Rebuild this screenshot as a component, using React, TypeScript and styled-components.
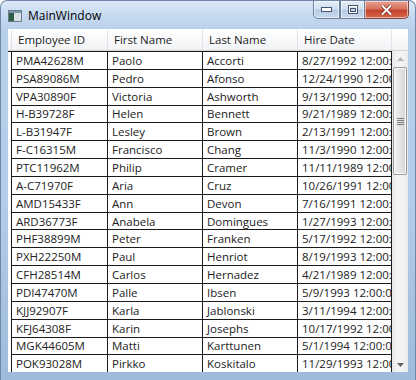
import React from "react";
import styled, { createGlobalStyle } from "styled-components";

const GlobalStyle = createGlobalStyle`
  html, body {
    margin: 0;
    padding: 0;
    background: #ffffff;
  }
  body {
    font-family: "Open Sans", "Noto Sans", sans-serif;
  }
`;

type Employee = {
  id: string;
  first: string;
  last: string;
  hired: string;
};

const employees: Employee[] = [
  { id: "PMA42628M", first: "Paolo", last: "Accorti", hired: "8/27/1992" },
  { id: "PSA89086M", first: "Pedro", last: "Afonso", hired: "12/24/1990" },
  { id: "VPA30890F", first: "Victoria", last: "Ashworth", hired: "9/13/1990" },
  { id: "H-B39728F", first: "Helen", last: "Bennett", hired: "9/21/1989" },
  { id: "L-B31947F", first: "Lesley", last: "Brown", hired: "2/13/1991" },
  { id: "F-C16315M", first: "Francisco", last: "Chang", hired: "11/3/1990" },
  { id: "PTC11962M", first: "Philip", last: "Cramer", hired: "11/11/1989" },
  { id: "A-C71970F", first: "Aria", last: "Cruz", hired: "10/26/1991" },
  { id: "AMD15433F", first: "Ann", last: "Devon", hired: "7/16/1991" },
  { id: "ARD36773F", first: "Anabela", last: "Domingues", hired: "1/27/1993" },
  { id: "PHF38899M", first: "Peter", last: "Franken", hired: "5/17/1992" },
  { id: "PXH22250M", first: "Paul", last: "Henriot", hired: "8/19/1993" },
  { id: "CFH28514M", first: "Carlos", last: "Hernadez", hired: "4/21/1989" },
  { id: "PDI47470M", first: "Palle", last: "Ibsen", hired: "5/9/1993" },
  { id: "KJJ92907F", first: "Karla", last: "Jablonski", hired: "3/11/1994" },
  { id: "KFJ64308F", first: "Karin", last: "Josephs", hired: "10/17/1992" },
  { id: "MGK44605M", first: "Matti", last: "Karttunen", hired: "5/1/1994" },
  { id: "POK93028M", first: "Pirkko", last: "Koskitalo", hired: "11/29/1993" },
];

const columns = [
  { title: "Employee ID", width: 96 },
  { title: "First Name", width: 95 },
  { title: "Last Name", width: 95 },
  { title: "Hire Date", width: 94 },
];

const Window = styled.div`
  width: 416px;
  height: 380px;
  box-sizing: border-box;
  display: flex;
  flex-direction: column;
  border: 1px solid #6d88a8;
  border-bottom: none;
  border-radius: 7px 7px 0 0;
  background: linear-gradient(
    180deg,
    #dce9f7 0px,
    #c6daf0 14px,
    #b9d0ea 30px,
    #b4cce8 200px,
    #9fbadb 380px
  );
  overflow: hidden;
`;

const TitleBar = styled.div`
  height: 28px;
  flex-shrink: 0;
  display: flex;
  align-items: flex-start;
`;

const TitleLabel = styled.div`
  display: flex;
  align-items: center;
  gap: 6px;
  padding: 6px 0 0 7px;
  font-family: "Open Sans", "Noto Sans", sans-serif;
  font-size: 12px;
  color: #000000;
`;

const CaptionButtons = styled.div`
  margin-left: auto;
  margin-right: 6px;
  display: flex;
  margin-top: -1px;
`;

const CaptionButton = styled.div<{ $close?: boolean; $w: number }>`
  width: ${(p) => p.$w}px;
  height: 19px;
  box-sizing: border-box;
  display: flex;
  align-items: center;
  justify-content: center;
  border: 1px solid ${(p) => (p.$close ? "#83413a" : "#6a7f9c")};
  border-left-width: ${(p) => (p.$close ? 0 : 1)}px;
  box-shadow: inset 0 0 0 1px rgba(255, 255, 255, 0.55);
  background: ${(p) =>
    p.$close
      ? "linear-gradient(180deg, #e8a293 0%, #d7735f 45%, #c4432c 55%, #d5694c 100%)"
      : "linear-gradient(180deg, #e4edf7 0%, #d0dfef 45%, #b7cbe3 55%, #c7d9ee 100%)"};
  &:first-child {
    border-radius: 0 0 0 5px;
  }
  &:last-child {
    border-radius: 0 0 5px 0;
  }
`;

const Client = styled.div`
  flex: 1;
  margin: 0 7px 8px 7px;
  background: #ffffff;
  display: flex;
  flex-direction: column;
  overflow: hidden;
`;

const HeaderRow = styled.div`
  height: 22px;
  flex-shrink: 0;
  display: flex;
  padding-left: 3px;
  background: linear-gradient(180deg, #ffffff 0%, #f7f8fa 60%, #f1f2f4 100%);
  border-bottom: 1px solid #d5d5d5;
  box-sizing: border-box;
`;

const HeaderCell = styled.div<{ $w: number }>`
  width: ${(p) => p.$w}px;
  flex-shrink: 0;
  box-sizing: border-box;
  border-left: 1px solid #e2e3ea;
  padding-left: 6px;
  display: flex;
  align-items: center;
  font-size: 11.5px;
  color: #1b1b1b;
  white-space: nowrap;
  overflow: hidden;
`;

const HeaderFiller = styled.div`
  flex: 1;
  border-left: 1px solid #e2e3ea;
`;

const Body = styled.div`
  flex: 1;
  display: flex;
  min-height: 0;
`;

const RowArea = styled.div`
  flex-shrink: 0;
  display: flex;
  flex-direction: column;
  padding-left: 3px;
  border-top: 1px solid #1a1a1a;
`;

const Row = styled.div`
  height: 17.85px;
  flex-shrink: 0;
  display: flex;
  border-left: 1px solid #1a1a1a;
  border-bottom: 1px solid #1a1a1a;
  box-sizing: border-box;
`;

const Cell = styled.div<{ $w: number }>`
  width: ${(p) => p.$w}px;
  flex-shrink: 0;
  box-sizing: border-box;
  border-right: 1px solid #1a1a1a;
  padding-left: 4px;
  display: flex;
  align-items: center;
  font-size: 11.5px;
  color: #222222;
  white-space: nowrap;
  overflow: hidden;
`;

const ScrollBar = styled.div`
  width: 16px;
  margin-left: auto;
  display: flex;
  flex-direction: column;
  align-items: center;
  background: linear-gradient(90deg, #e6e6e6 0%, #f3f3f3 30%, #f3f3f3 70%, #e9e9e9 100%);
`;

const Arrow = styled.div`
  height: 15px;
  flex-shrink: 0;
  display: flex;
  align-items: center;
  justify-content: center;
`;

const Track = styled.div`
  flex: 1;
  width: 100%;
  display: flex;
  flex-direction: column;
  padding: 1px 1px 0 1px;
  box-sizing: border-box;
`;

const Thumb = styled.div`
  height: 108px;
  box-sizing: border-box;
  border: 1px solid #9a9a9a;
  border-radius: 2px;
  box-shadow: inset 0 0 0 1px #fafafa;
  background: linear-gradient(90deg, #f0f0f0 0%, #e4e4e4 50%, #d6d6d6 100%);
  display: flex;
  align-items: center;
  justify-content: center;
`;

const AppIcon = () => (
  <svg width="14" height="12" viewBox="0 0 14 12">
    <rect x="0.5" y="0.5" width="13" height="11" fill="#d8e0e6" stroke="#6b7d88" />
    <rect x="1" y="1" width="12" height="2" fill="#7c97ad" />
    <rect x="1" y="3" width="5" height="8" fill="#2f5d48" />
  </svg>
);

const MinGlyph = () => (
  <svg width="11" height="5" viewBox="0 0 11 5">
    <rect x="0.5" y="0.5" width="10" height="4" fill="#ffffff" stroke="#46556b" />
  </svg>
);

const RestoreGlyph = () => (
  <svg width="10" height="9" viewBox="0 0 10 9">
    <rect x="0.5" y="0.5" width="9" height="8" fill="none" stroke="#46556b" />
    <rect x="1.5" y="1.5" width="7" height="6" fill="none" stroke="#ffffff" />
    <rect x="2.5" y="3.5" width="5" height="3" fill="none" stroke="#46556b" />
  </svg>
);

const CloseGlyph = () => (
  <svg width="11" height="10" viewBox="0 0 11 10">
    <path d="M1.5 1 L9.5 9 M9.5 1 L1.5 9" stroke="#7a2a20" strokeWidth="3.4" strokeLinecap="square" />
    <path d="M1.5 1 L9.5 9 M9.5 1 L1.5 9" stroke="#ffffff" strokeWidth="1.9" strokeLinecap="square" />
  </svg>
);

const UpArrow = () => (
  <svg width="7" height="4" viewBox="0 0 7 4">
    <path d="M0 4 L3.5 0 L7 4 Z" fill="#b5b5b5" />
  </svg>
);

const DownArrow = () => (
  <svg width="7" height="4" viewBox="0 0 7 4">
    <path d="M0 0 L3.5 4 L7 0 Z" fill="#606060" />
  </svg>
);

const Grip = () => (
  <svg width="7" height="7" viewBox="0 0 7 7">
    <path d="M0 0.5 H7 M0 2.5 H7 M0 4.5 H7 M0 6.5 H7" stroke="#7a7a7a" strokeWidth="1" />
  </svg>
);

const App = () => {
  return (
    <>
      <GlobalStyle />
      <Window>
        <TitleBar>
          <TitleLabel>
            <AppIcon />
            MainWindow
          </TitleLabel>
          <CaptionButtons>
            <CaptionButton $w={27}>
              <MinGlyph />
            </CaptionButton>
            <CaptionButton $w={25}>
              <RestoreGlyph />
            </CaptionButton>
            <CaptionButton $w={44} $close>
              <CloseGlyph />
            </CaptionButton>
          </CaptionButtons>
        </TitleBar>
        <Client>
          <HeaderRow>
            {columns.map((c) => (
              <HeaderCell key={c.title} $w={c.width}>
                {c.title}
              </HeaderCell>
            ))}
            <HeaderFiller />
          </HeaderRow>
          <Body>
            <RowArea>
              {employees.map((e) => (
                <Row key={e.id}>
                  <Cell $w={columns[0].width}>{e.id}</Cell>
                  <Cell $w={columns[1].width}>{e.first}</Cell>
                  <Cell $w={columns[2].width}>{e.last}</Cell>
                  <Cell $w={columns[3].width}>{e.hired} 12:00:00 AM</Cell>
                </Row>
              ))}
            </RowArea>
            <ScrollBar>
              <Arrow>
                <UpArrow />
              </Arrow>
              <Track>
                <Thumb>
                  <Grip />
                </Thumb>
              </Track>
              <Arrow>
                <DownArrow />
              </Arrow>
            </ScrollBar>
          </Body>
        </Client>
      </Window>
    </>
  );
};

export default App;
